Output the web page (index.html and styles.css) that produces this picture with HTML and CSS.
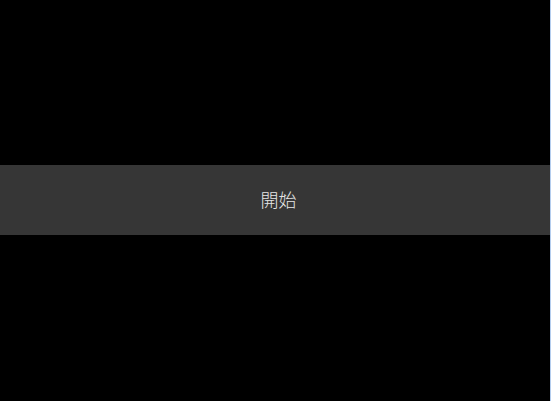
FILE: index.html
```html
<!DOCTYPE html>
<html lang="zh-Hant">
<head>
  <meta charset="UTF-8">
  <title>開始</title>
  <link rel="stylesheet" href="styles.css">
</head>
<body>
  <div class="screen">
    <div class="start-bar">
      <button class="start-button">開始</button>
    </div>
  </div>
</body>
</html>
```

FILE: styles.css
```css
html, body {
  margin: 0;
  height: 100%;
  background-color: #000;
}

body {
  font-family: "Noto Sans CJK TC", "Noto Sans", sans-serif;
}

.screen {
  height: 100%;
  border-right: 1px solid #b4cdee;
  padding-top: 165px;
  box-sizing: border-box;
}

.start-bar {
  height: 70px;
  background-color: #363636;
  display: flex;
  justify-content: center;
  align-items: center;
}

.start-button {
  background: none;
  border: none;
  color: #e6e6e6;
  font-family: inherit;
  font-size: 18px;
  font-weight: 300;
  padding: 0 0 3px 7px;
  cursor: pointer;
}
```
